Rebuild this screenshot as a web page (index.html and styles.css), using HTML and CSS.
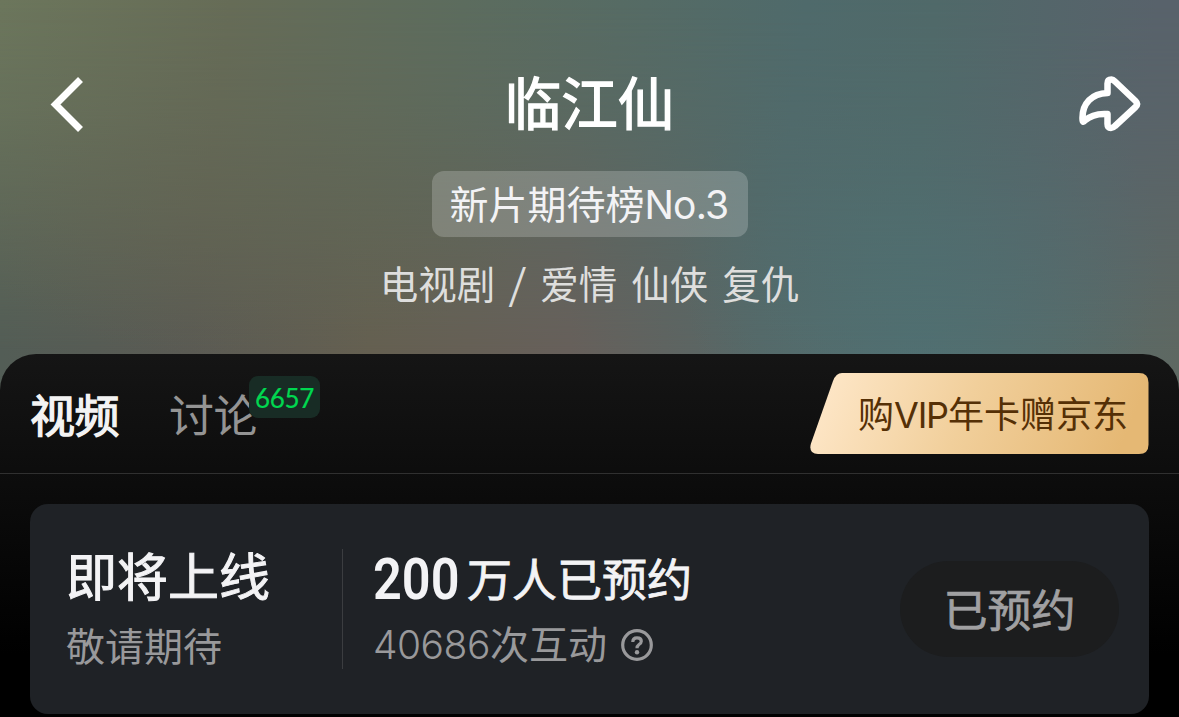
FILE: index.html
```
<!DOCTYPE html>
<html lang="zh-CN">
<head>
  <meta charset="UTF-8" />
  <meta name="viewport" content="width=device-width, initial-scale=1" />
  <title>临江仙</title>
  <link rel="stylesheet" href="styles.css">
</head>
<body>

  <header class="hero">
    <div class="nav">
      <svg class="back" viewBox="0 0 34 58">
        <path d="M30.5 3.5 L5.5 28.5 L30.5 53.5" />
      </svg>
      <h1>临江仙</h1>
      <svg class="share" viewBox="0 0 64 58">
        <path d="M29.500 17 V7.500 Q29.500 3.5 33.5 3.5 Q35 3.5 37 5.5 L57.5 25 Q60.500 28 57.5 31 L37 50 Q35 52 33 52 Q29.500 52 29.500 48 V38 Q15 37 7 44.500 Q4.500 47.500 4.500 43 C4 27 14 17.500 29.500 17 Z" />
      </svg>
    </div>
    <div class="rank">新片期待榜<span>No.3</span></div>
    <p class="genres">
      <span>电视剧</span><span class="slash">/</span><span>爱情</span><span>仙侠</span><span>复仇</span>
    </p>
  </header>

  <main class="sheet">
    <nav class="tabs">
      <a class="tab active">视频</a>
      <a class="tab">讨论<span class="count">6657</span></a>
      <a class="vip">
        <svg viewBox="0 0 339 81">
          <defs>
            <linearGradient id="gold" x1="0" y1="0" x2="1" y2="0.1">
              <stop offset="0" stop-color="#ffe9cc" />
              <stop offset="0.5" stop-color="#f1cf9b" />
              <stop offset="1" stop-color="#e5b874" />
            </linearGradient>
          </defs>
          <path d="M32 0 H329 Q338.500 0 338.500 9.500 V71.500 Q338.500 81 329 81 H8 Q-1.500 81 0.800 71 L23 8 Q26 0 32 0 Z" fill="url(#gold)" />
        </svg>
        <span>购<i>VIP</i>年卡赠京东</span>
      </a>
    </nav>

    <section class="card">
      <div class="status">
        <h2>即将上线</h2>
        <p>敬请期待</p>
      </div>
      <div class="stats">
        <h3><b>200</b>万人已预约</h3>
        <p><span class="num">40686</span>次互动
          <svg class="help" viewBox="0 0 32 32">
            <circle cx="16" cy="16" r="14.300" />
            <path d="M11.800 13 Q11.800 8.800 16 8.800 Q20.300 8.800 20.300 12.300 Q20.300 14 18 15.500 Q16 17 16 19.300" />
            <circle class="dot" cx="16" cy="23.300" r="2.200" />
          </svg>
        </p>
      </div>
      <button class="booked">已预约</button>
    </section>
  </main>

</body>
</html>
```
FILE: styles.css
```
* {
  box-sizing: border-box;
}

body {
  margin: 0;
  height: 717px;
  overflow: hidden;
  font-family: Inter, "Noto Sans CJK SC", sans-serif;
  background-color: #000;
  color: #f3f3f5;
}

h1, h2, h3, p {
  margin: 0;
  font-weight: 400;
}

/* blurred poster colours */
.hero {
  position: relative;
  height: 400px;
  padding-top: 66px;
  background:
    radial-gradient(ellipse 240px 240px at 920px 260px, #507072, rgba(80, 112, 114, 0)),
    radial-gradient(ellipse 300px 160px at 240px 200px, rgba(96, 95, 80, 0.7), rgba(96, 95, 80, 0)),
    linear-gradient(90deg, #535d56 0, #5b5b54 190px, #656051 370px, #67605b 570px, #576867 760px, #526e70 920px, #5e6862 1179px);
}

.hero::before {
  content: "";
  position: absolute;
  inset: 0;
  background: linear-gradient(97deg, #6c765c 0, #666c57 230px, #5c6c5e 460px, #4f6a6b 800px, #506969 930px, #58626b 1150px);
  -webkit-mask-image: linear-gradient(#000 0, rgba(0, 0, 0, 0.8) 110px, transparent 350px);
  mask-image: linear-gradient(#000 0, rgba(0, 0, 0, 0.8) 110px, transparent 350px);
}

.nav {
  position: relative;
  display: flex;
  justify-content: space-between;
  align-items: center;
  height: 78px;
  padding: 0 37px 0 50px;
}

.nav h1 {
  font-size: 56.500px;
  line-height: 78px;
  color: #fff;
  -webkit-text-stroke: 1.300px #fff;
  margin: 0 0 0 17px;
}

.back, .share {
  fill: none;
  stroke: #fff;
  stroke-width: 7;
}

.back {
  width: 34px;
  height: 58px;
}

.share {
  width: 64px;
  height: 58px;
  stroke-width: 6.500;
  stroke-linejoin: round;
}

.rank {
  position: relative;
  width: 316px;
  height: 66px;
  margin: 27px auto 0;
  padding-left: 18px;
  border-radius: 12px;
  background-color: rgba(255, 255, 255, 0.2);
  font-size: 39px;
  line-height: 67px;
  white-space: nowrap;
}

.rank span {
  letter-spacing: -0.800px;
}

.genres {
  position: relative;
  display: flex;
  justify-content: center;
  gap: 14px;
  margin-top: 18px;
  font-size: 38.500px;
  line-height: 61px;
  color: #dededd;
}

.slash {
  width: 17px;
  font-size: 46px;
  font-weight: 300;
  text-align: center;
  transform: skewX(-5deg);
}

.sheet {
  position: relative;
  height: 363px;
  margin-top: -46px;
  border-radius: 36px 36px 0 0;
  background: linear-gradient(#151515 0, #0c0c0c 130px, #000 300px);
}

.tabs {
  display: flex;
  align-items: center;
  height: 120px;
  padding: 0 30px;
  border-bottom: 1px solid #303030;
}

.tab {
  position: relative;
  margin-right: 50px;
  padding-top: 6px;
  font-size: 45px;
  line-height: 66px;
  letter-spacing: -0.500px;
  color: #949494;
}

.tab.active {
  color: #f3f3f3;
  -webkit-text-stroke: 1.300px #f3f3f3;
}

.count {
  position: absolute;
  left: 80px;
  top: -2px;
  width: 71px;
  height: 42px;
  border-radius: 9px;
  background-color: #182c25;
  color: #00d850;
  font-family: Lato, sans-serif;
  font-size: 26px;
  line-height: 44px;
  letter-spacing: -0.300px;
  text-align: center;
  -webkit-text-stroke: 0.200px #00d850;
}

.vip {
  display: grid;
  width: 339px;
  height: 81px;
  margin-left: auto;
  color: #553006;
  font-size: 36px;
  line-height: 84px;
}

.vip svg, .vip > span {
  grid-area: 1 / 1;
}

.vip > span {
  height: 81px;
  padding-left: 48px;
  white-space: nowrap;
}

.vip i {
  font-style: normal;
  letter-spacing: -1.200px;
}

.card {
  display: flex;
  height: 210px;
  margin: 30px 30px 0;
  padding: 0 30px 0 36px;
  border-radius: 18px;
  background-color: #1f2226;
}

.status {
  width: 277px;
  height: 120px;
  margin-top: 45px;
  border-right: 1px solid #3b3d40;
}

.status h2 {
  margin-top: -8px;
  font-size: 51px;
  line-height: 74px;
  -webkit-text-stroke: 1px #f3f3f5;
}

.status p, .stats p {
  font-size: 39px;
  line-height: 60px;
  color: #99999b;
}

.status p {
  margin-top: 2px;
}

.stats {
  margin: 33px 0 0 30px;
}

.stats h3 {
  display: flex;
  height: 84px;
  font-size: 45px;
  line-height: 88px;
  -webkit-text-stroke: 0.800px #f3f3f5;
}

.stats b {
  width: 94px;
  font-family: Roboto, sans-serif;
  font-size: 58px;
  font-weight: 600;
  line-height: 84px;
  transform: scaleX(0.870);
  transform-origin: left;
  -webkit-text-stroke: 0;
}

.stats p {
  display: flex;
  align-items: center;
  margin-top: -6px;
}

.num {
  letter-spacing: -0.500px;
  font-weight: 300;
}

.help {
  width: 32px;
  height: 32px;
  margin-left: 14px;
  fill: none;
  stroke: #99999b;
  stroke-width: 3.200;
}

.help .dot {
  fill: #99999b;
  stroke: none;
}

.booked {
  width: 219px;
  height: 96px;
  margin: 57px 0 0 auto;
  padding: 0 0 3px;
  border: none;
  border-radius: 48px;
  background-color: #1c1d1e;
  color: #a0a0a2;
  font-family: inherit;
  font-size: 44px;
  -webkit-text-stroke: 0.700px #a0a0a2;
}
```
